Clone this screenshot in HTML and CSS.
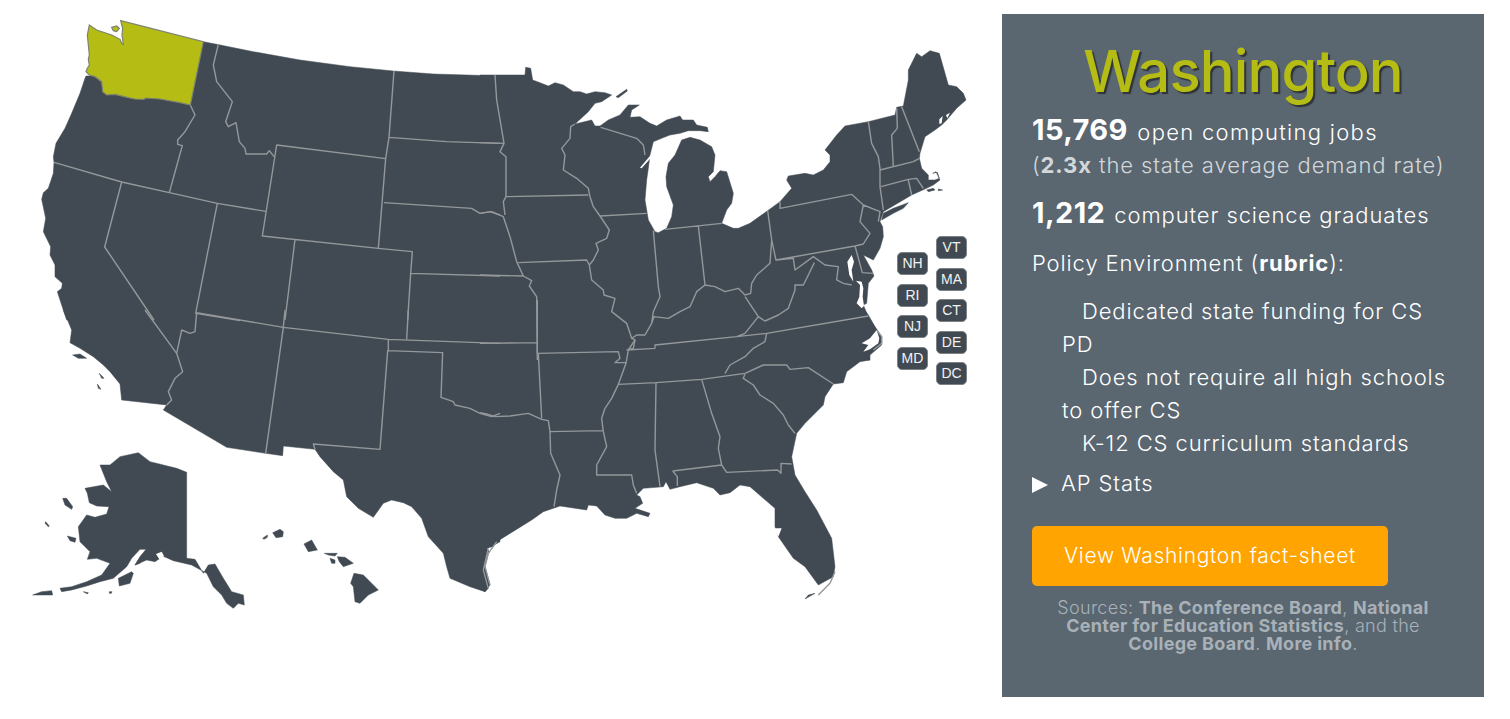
FILE: index.html
```html
<!DOCTYPE html>
<html lang="en">
<head>
<meta charset="utf-8">
<title>Washington</title>
<link rel="stylesheet" href="styles.css">
</head>
<body>
<main class="page">
<section class="map">
<svg class="usa" width="1002" height="640" viewBox="0 0 1002 640" aria-label="Map of the United States">
<g transform="translate(0 0) scale(.33333)">
<path class="land" d="M610,125 650,133 760,155 900,180 1050,200 1180,213 1300,222 1500,228 1500,960 200,960 185,915 172,875 185,865 187,850 165,830 165,795 150,765 152,740 130,695 137,655 125,598 130,578 145,565 160,520 162,487 160,470 168,430 195,385 215,340 240,280 255,235 258,228 285,228 308,250 310,270 480,280 571,305Z"/>
</g>
<g transform="translate(480 40) scale(.33333)">
<path class="land" d="M0,105 135,105 137,82 152,85 158,120 180,128 205,138 225,128 250,135 280,155 300,155 320,162 345,155 375,158 395,165 365,185 345,190 325,215 285,252 335,240 345,258 360,258 385,240 420,225 445,195 478,195 455,210 450,232 480,230 510,250 530,258 560,240 600,228 608,240 640,240 650,255 682,262 685,275 660,272 625,272 600,280 570,285 545,295 520,305 510,345 505,385 500,420 495,480 505,540 525,575 535,578 560,565 575,530 580,495 560,440 558,410 565,370 585,345 605,300 630,292 660,300 695,320 705,345 700,395 685,410 690,425 705,410 720,392 740,395 760,460 755,490 740,510 725,550 760,565 775,565 810,550 863,512 900,485 935,445 920,420 925,408 975,400 1000,405 1030,390 1050,365 1050,345 1035,330 1070,285 1095,258 1165,245 1245,225 1250,202 1270,198 1285,120 1285,90 1310,40 1325,50 1350,32 1378,40 1405,135 1430,140 1450,160 1458,180 1430,205 1400,240 1385,255 1365,270 1335,290 1320,340 1318,355 1325,385 1345,405 1345,420 1365,420 1378,415 1372,397 1358,400 1368,395 1380,420 1360,435 1335,447 1295,465 1210,515 1200,545 1208,560 1210,590 1200,625 1180,660 1150,645 1175,690 1182,708 1165,730 1160,790 1150,795 1165,830 1185,860 1205,890 1205,915 1170,945 1170,960 0,960Z"/>
<path class="land" d="M1210,520 1240,505 1285,488 1270,505 1240,520 1205,540Z M408,170 440,148 442,153 415,173Z M1340,450 1360,445 1365,450 1345,455Z M1375,447 1388,450 1375,452Z"/>
</g>
<g transform="translate(0 310) scale(.33333)">
<path class="land" d="M190,0 1500,0 1500,695 1465,715 1450,780 1465,835 1455,845 1410,830 1350,805 1340,770 1330,730 1285,680 1265,625 1235,590 1210,578 1175,570 1150,580 1120,622 1075,595 1040,560 1030,510 1000,485 960,440 945,418 850,408 848,437 797,430 680,412 490,300 500,285 365,270 360,222 330,185 310,165 280,140 240,115 210,98 215,60Z"/>
<path class="land" d="M300,465 330,465 360,440 415,428 450,455 530,475 560,487 560,745 585,748 610,790 625,765 645,762 670,805 695,845 730,855 733,885 715,880 700,895 680,880 665,855 640,830 620,790 575,765 520,752 470,730 440,735 420,760 405,765 420,740 438,718 420,718 395,745 380,770 340,805 300,815 260,828 215,840 185,845 180,835 215,830 260,815 305,795 330,760 290,745 262,748 270,725 240,695 235,650 260,615 285,622 320,612 327,590 290,588 268,578 262,550 255,535 310,525 335,545 320,515Z M405,765 425,735 470,728 490,735 480,745 465,755 440,750Z M98,855 125,845 155,842 158,855 125,855Z M188,565 200,565 218,590 215,598 195,585Z M137,635 148,648 145,650 135,640Z M355,805 395,785 400,790 390,820 358,828Z M202,678 228,685 225,697 210,692Z M328,845 336,845 334,850 328,850Z M250,845 265,848 262,852Z"/>
<path class="land" d="M818,668 840,658 850,665 848,680 828,683Z M788,685 802,675 802,682 792,688Z M912,702 935,690 952,720 925,725Z M973,730 1012,730 1005,738 985,735Z M990,745 1005,750 1005,760 995,760Z M1012,740 1035,742 1060,760 1030,770 1018,755Z M1062,790 1090,795 1135,840 1105,855 1080,880 1065,875 1060,830 1052,820Z"/>
<path class="land" d="M218,135 240,132 260,145 235,145Z M298,190 312,205 305,205Z M292,222 303,238 295,235Z"/>
<path class="water" d="M468,732 485,725 492,738 478,748Z"/>
</g>
<g transform="translate(480 300) scale(.33333)">
<path class="land" d="M0,0 1130,0 1145,20 1165,45 1190,90 1205,110 1205,130 1180,150 1150,155 1170,180 1140,185 1100,215 1090,248 1060,252 1035,290 1030,315 975,370 950,400 935,470 945,525 975,575 1010,630 1055,715 1065,800 1060,830 1015,855 975,800 940,775 895,710 885,680 885,625 850,595 810,560 780,555 750,578 720,585 700,565 650,548 600,560 570,568 558,545 550,560 490,565 470,585 480,590 488,610 465,625 510,640 505,650 470,640 440,655 405,655 375,645 350,618 325,615 320,630 240,618 190,635 155,660 50,725 25,760 15,800 30,855 15,875 0,865Z"/>
<path class="land" d="M1005,880 975,897 985,885Z"/>
<path class="water" d="M1190,90 1198,115 1195,130 1170,148 1150,155 1165,135 1145,130 1170,115Z M880,685 905,685 895,710Z M22,745 40,740 28,755Z"/>
<path class="line" d="M0,130 172,128 M172,0 172,160 415,155 420,175 405,188 438,188 M465,120 445,150 438,190 415,253 395,295 375,325 365,355 370,395 380,440 350,495 350,525 455,525 460,555 470,580 M175,160 185,355 M0,338 20,342 45,350 90,348 145,340 185,358 205,362 210,395 212,460 240,525 230,570 222,620 M210,395 368,392 M528,248 525,450 540,560 M415,253 528,248 665,238 795,220 850,195 920,195 930,208 985,203 1060,252 M665,238 695,340 720,410 715,445 725,495 740,517 893,510 903,520 903,490 935,492 M578,513 725,495 M578,513 592,530 592,558 M795,222 790,235 820,255 840,285 880,310 910,345 925,375 945,400 M860,100 855,125 820,145 795,170 750,195 735,220 M50,725 25,760 15,800 30,855 M1065,815 1050,850 1015,885 M1190,90 1205,110 1205,130 1180,150"/>
</g>
<g transform="translate(480 40) scale(.33333)">
<path class="water" d="M523,332 480,383 485,385 525,340Z M1115,645 1102,665 1108,705 1120,725 1115,690 1122,665Z M1128,722 1140,735 1138,770 1130,790 1145,805 1152,798 1148,770 1150,745 1145,725Z M1378,238 1388,228 1385,250 1378,252Z M1398,225 1410,218 1402,235Z"/>
<path class="line" d="M45,105 50,180 72,310 60,335 78,350 78,470 325,465 M0,308 72,310 M78,470 70,485 75,525 M0,520 35,515 70,530 90,590 110,665 130,708 155,722 148,738 170,770 172,960 M115,668 320,660 328,675 M0,705 130,708 M285,252 272,260 270,295 245,325 255,345 250,390 290,415 325,445 330,470 340,500 360,528 388,570 380,595 348,610 355,630 340,660 328,675 335,720 370,750 372,765 405,775 395,815 440,850 455,895 470,885 495,885 515,850 520,815 540,770 535,740 520,572 M360,528 500,520 M362,262 470,295 490,315 495,345 M555,568 725,550 M655,558 675,735 650,755 630,800 600,815 565,835 522,830 515,850 M675,735 705,740 735,755 775,745 795,765 812,760 815,730 830,705 870,670 875,600 863,512 M875,600 888,660 1125,618 1150,612 1170,580 1140,545 1150,495 1115,463 900,505 900,485 M1150,495 1200,515 1195,545 M888,660 940,655 945,690 1000,650 1035,675 1075,680 1070,720 1090,730 1115,735 M1003,668 985,705 970,735 945,735 945,750 925,805 895,825 855,843 835,830 795,770 M835,830 795,880 770,890 M440,930 525,925 525,915 770,890 860,880 1165,828 M455,895 465,900 460,925 440,930 M1165,245 1175,310 1195,350 1200,385 1200,440 1210,510 M1250,205 1252,265 1235,285 1240,380 M1265,200 1318,335 M1200,390 1300,365 1318,355 M1203,440 1285,418 1310,415 1330,445 M1285,420 1295,465 M1125,618 1147,698 1180,700"/>
</g>
<g transform="translate(0 310) scale(.33333)">
<path class="line" d="M590,8 850,52 1165,88 1500,100 M590,8 585,65 570,70 545,60 530,130 435,0 M530,130 548,185 525,205 505,245 515,270 500,285 M855,0 850,52 797,430 M1225,0 1220,88 M1165,88 1165,120 1163,122 1328,128 1323,262 1360,275 1365,285 1410,295 1440,310 1475,320 1500,310 M1163,122 1140,418 940,402 945,418 M1465,715 1450,780 1465,835"/>
</g>
<g transform="translate(0 0) scale(.33333)">
<path class="line" d="M162,487 365,546 508,578 652,610 797,634 M365,546 314,741 462,960 M571,315 585,345 555,395 533,420 533,433 547,437 535,480 508,578 M655,133 640,195 650,245 697,305 677,365 685,380 708,368 718,425 735,445 738,462 800,462 808,452 822,470 M830,435 1157,476 1135,745 787,708Z M1182,213 1167,412 1157,476 M1167,412 1340,425 1500,430 M1152,608 1415,625 1440,640 1470,635 1500,645 M1135,745 1237,755 1232,820 1223,960 M885,718 855,960 M1232,820 1500,828 M652,610 587,940 720,962"/>
<path class="state-active" d="M362,62 610,125 571,315 540,308 480,297 437,294 432,298 405,297 385,293 345,283 320,285 308,275 305,245 285,230 268,225 258,215 262,205 268,195 265,178 268,165 262,105 268,75 290,90 335,105 360,118 365,130 370,133 366,105 368,85Z M335,82 350,78 358,85 350,95 340,92Z"/>
</g>
</svg>
<div class="small-states">
<div class="small-col small-col-left">
<span class="pill">NH</span><span class="pill">RI</span><span class="pill">NJ</span><span class="pill">MD</span>
</div>
<div class="small-col small-col-right">
<span class="pill">VT</span><span class="pill">MA</span><span class="pill">CT</span><span class="pill">DE</span><span class="pill">DC</span>
</div>
</div>
</section>
<aside class="panel">
<h1 class="title">Washington</h1>
<p class="stat first"><strong class="num">15,769</strong> open computing jobs<br><span class="sub">(<b>2.3x</b> the state average demand rate)</span></p>
<p class="stat"><strong class="num">1,212</strong> computer science graduates</p>
<p class="stat">Policy Environment (<b>rubric</b>):</p>
<ul class="policy">
<li>Dedicated state funding for CS PD</li>
<li>Does not require all high schools to offer CS</li>
<li>K-12 CS curriculum standards</li>
</ul>
<p class="ap"><span class="arrow"></span>AP Stats</p>
<a class="cta" href="#">View Washington fact-sheet</a>
<p class="sources">Sources: <b>The Conference Board</b>, <b>National Center for Education Statistics</b>, and the <b>College Board</b>. <b>More info</b>.</p>
</aside>
</main>
</body>
</html>
```
FILE: styles.css
```css
html, body { margin: 0; padding: 0; background: #fff; }
body { font-family: Inter, "Open Sans", sans-serif; }
.page { display: flex; align-items: flex-start; width: 1510px; height: 719px; overflow: hidden; }
.map { position: relative; flex: 0 0 1002px; height: 640px; }
.usa { display: block; }
.land { fill: #414a52; stroke: #414a52; stroke-width: .5px; vector-effect: non-scaling-stroke; stroke-linejoin: round; }
.water { fill: #fff; }
.line { fill: none; stroke: #94989b; stroke-width: 1.4px; vector-effect: non-scaling-stroke; stroke-linejoin: round; }
.state-active { fill: #b5bd14; stroke: #7d8470; stroke-width: 1.2px; vector-effect: non-scaling-stroke; }
.small-states { position: absolute; left: 897px; top: 236px; display: flex; gap: 8px; }
.small-col { display: flex; flex-direction: column; gap: 8.5px; }
.small-col-left { margin-top: 16px; }
.pill { display: block; box-sizing: border-box; width: 31px; height: 23px; text-align: center; background: #414a52; border: 1px solid #7d8287; border-radius: 5px; color: #f2f2f2; font: 14px/21px "Liberation Sans", Arial, sans-serif; }
.panel { box-sizing: border-box; flex: 0 0 480px; height: 683px; margin-top: 14px; padding: 24px 30px 0; background: #5a6670; color: #fff; font-weight: 300; font-size: 22px; line-height: 33px; letter-spacing: .9px; }
.title { margin: 0 0 9px; text-align: center; font-size: 58px; line-height: 66px; font-weight: 500; letter-spacing: -.9px; color: #b5bd14; text-shadow: 2px 2px 1px #2f3438; }
.stat { margin: 0 0 15px; }
.stat.first { margin-bottom: 14px; letter-spacing: 1.3px; }
.num { font-size: 29px; font-weight: 700; letter-spacing: .4px; margin-right: 2px; }
.sub { color: #d3d7da; letter-spacing: .9px; }
.sub b { font-weight: 700; }
.stat b { font-weight: 700; }
.policy { list-style: none; margin: 0 0 10px; padding: 0 0 0 30px; width: 392px; }
.policy li { text-indent: 20px; }
.ap { margin: 0 0 30px; line-height: 26px; }
.arrow { display: inline-block; width: 0; height: 0; margin: 0 13px 0 0; border-left: 16px solid #fff; border-top: 8px solid transparent; border-bottom: 8px solid transparent; vertical-align: -2px; }
.cta { display: block; box-sizing: border-box; width: 356px; height: 60px; line-height: 60px; text-align: center; background: #ffa400; border-radius: 5px; color: #fff; text-decoration: none; font-size: 21px; letter-spacing: .7px; }
.sources { margin: 13px 8px 0; text-align: center; font-size: 18px; line-height: 18px; letter-spacing: .3px; color: #a9b1b8; }
.sources b { font-weight: 700; }
```
